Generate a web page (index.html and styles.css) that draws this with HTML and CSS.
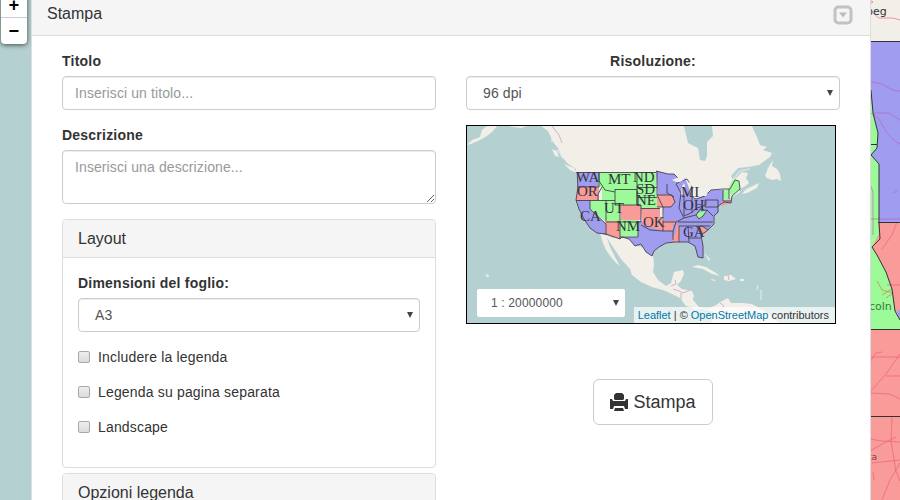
FILE: index.html
```html
<!DOCTYPE html>
<html lang="it">
<head>
<meta charset="utf-8">
<title>Stampa</title>
<link rel="stylesheet" href="styles.css">
</head>
<body>
<div class="viewport">
  <svg class="basemap" viewBox="870 0 30 500" width="30" height="500">
    <path fill="#f2efe9" d="M870 0H900V41H870Z"/>
    <path fill="#a09df1" d="M870 41H900V222H870Z"/>
    <path fill="#9cfa99" d="M870 90L873 113L878 133L877 148L871 155L879 164V222L880 240L870 250Z"/>
    <path fill="#9cfa99" d="M870 244L876 254L886 272L892 291L895 312L900 320V329H870Z"/>
    <path fill="#f99b99" d="M878 222H900V313L895 311L892 289L886 272L877 255L872 247L879 234Z"/>
    <path fill="#a09df1" d="M897 312L900 309V320Z"/>
    <path fill="#f99b99" d="M870 329H900V500H870Z"/>
    <g fill="none" stroke="#b75ab4" stroke-width=".6">
      <path d="M870 82Q880 82 887 87T900 91M870 113C884 117 881 134 900 144M874 113H889L900 120M870 219H900M893 193L897 191M870 184L873 192V235"/>
    </g>
    <g fill="none" stroke="#ed5574" stroke-width=".6">
      <path d="M870 0L873 2L870 4M873 13L879 18H893L900 20M897 222L892 235L882 249M887 285H900M870 357H900M870 362L876 353L882 352M870 392L886 374L900 354M886 376H900M870 393L890 394L900 399M870 439L882 441L900 442M870 451L884 443L896 437M892 417L891 441L896 471L900 481M872 463L900 460M882 500L890 480L900 463M874 480L873 472"/>
      <path stroke="#d16b45" d="M877 281L882 290L893 293L886 298M882 295L892 289"/>
    </g>
    <path fill="none" stroke="#333" d="M870 41.5H900M871 90L873 113L878 133L877 148L871 155L879 164V222L880 239L872 247L877 255L886 272L892 289L895 311L900 320M871 144.500H877M878 222.500H900M870 329.500H900M870 416.500H900"/>
    <text class="city" x="866" y="15">beg</text>
    <text class="city city-green" x="869" y="310">coln</text>
    <text class="city city-small" x="868" y="460">ta</text>
  </svg>

  <div class="zoom-control"><span class="zoom-in">+</span><span class="zoom-out">−</span></div>

  <main class="panel">
    <header class="panel-head">
      <span>Stampa</span>
      <svg class="toggle" viewBox="0 0 20 20" width="20" height="20"><rect x="2" y="2" width="16" height="16" rx="3.500" fill="none" stroke="#c2c2c2" stroke-width="3"/><path fill="#bdbdbd" d="M6 7.500H14L10 12.500Z"/></svg>
    </header>
    <div class="columns">
      <section class="left">
        <label class="label" for="title">Titolo</label>
        <input class="field" id="title" placeholder="Inserisci un titolo...">
        <label class="label label-desc" for="desc">Descrizione</label>
        <textarea class="field area" id="desc" placeholder="Inserisci una descrizione..."></textarea>
        <div class="card">
          <div class="card-head">Layout</div>
          <div class="card-body">
            <span class="label">Dimensioni del foglio:</span>
            <div class="field select">A3<i class="arrow"></i></div>
            <div class="check"><i class="box"></i>Includere la legenda</div>
            <div class="check"><i class="box"></i>Legenda su pagina separata</div>
            <div class="check"><i class="box"></i>Landscape</div>
          </div>
        </div>
        <div class="card card-next"><div class="card-head">Opzioni legenda</div></div>
      </section>
      <section class="right">
        <span class="label label-center">Risoluzione:</span>
        <div class="field select">96 dpi<i class="arrow"></i></div>
        <div class="preview">
          <svg class="map" viewBox="467 126 368 197" width="368" height="197">
            <path fill="#b5d0d0" d="M467 126H835V323H467Z"/>
            <g fill="#f2efe9">
              <path d="M467 145L472 140L480 137L482 130L487 126H497L493 131L487 136L478 141L471 144ZM508 126H527L521 128L514 127Z"/>
              <path d="M541 126L548 131L553 142L558 148L561 155L567 163L576 169L578 190L600 225L640 245L700 230L713 210L720 200L729 199L740 192L735 183L731 176L738 168L748 167L759 165L770 157L772 153L763 150L767 147L760 145L757 137L754 131L752 126H712L713 136L707 142L707 156L705 161L700 160L698 148L688 143L684 126Z"/>
              <path d="M736 178L742 172L748 173L746 178L749 183L744 187L737 190L732 187ZM742 194L746 189L755 185L759 183L757 188L747 193ZM765 176L768 168L773 160L772 166L777 169L780 174L781 181L777 179L772 180L767 178Z"/>
              <path d="M552 149L557 151L559 157L555 156ZM564 164L574 168L577 173L570 170Z"/>
              <path d="M600 233L613 238L628 238L635 245L644 248L653 256L654 264L653 272L658 280L666 286L671 283L674 272L683 270L684 274L681 281L677 285L682 289L692 291L694 296L690 307L686 306L680 298L672 294L663 290L652 287L641 282L632 275L630 269L621 259L613 247L607 238L610 247L615 257L620 266L616 263L611 257L606 250L603 243Z"/>
              <path d="M683 294L692 292L693 300L699 307L708 309L716 305L722 301L728 298L731 303L742 303L752 304L761 309L769 314L779 323H711L714 312L704 309L695 310L687 304Z"/>
              <path d="M692 267L698 265L706 267L716 273L720 276L712 274L703 269ZM710 279L716 280L714 281ZM724 276L731 275L736 279L729 281L724 280ZM740 279H744V281H740ZM707 256L710 259L709 261ZM485 274L489 275L488 278ZM476 268L479 269ZM480 270L484 271Z"/>
            </g>
            <path fill="none" stroke="#d5e5e3" stroke-width="1.500" d="M729 187L735 177L740 171L750 169"/>
            <path fill="none" stroke="#e4f0ef" d="M552 135V142M557 149L563 159M758 285L757 290M761 290V300M705 254L709 260"/>
            <path fill="none" stroke="#cb91bc" stroke-width=".7" d="M552 126L559 135L562 143M671 286L676 284L675 280M673 289L679 291L683 293L690 290M681 293V299M720 303L724 306L721 310M728 275L729 280"/>

            <path fill="#a09df1" d="M577 172H599V187H577ZM577 200H590V209L606 224V235L597 233L590 228L584 219L579 208Z"/>
            <path fill="#a09df1" d="M656 171L661 172L668 174L674 174L681 181L685 178L689 188L691 198L697 199L705 195L711 190H723V203L718 207L719 212L714 216L713 224L708 230L701 235L703 246L703 258L698 257L695 246L688 242L675 242L666 243L659 247L654 251L652 256L646 252L641 244L635 246L629 239L622 237H638V221L664 223L663 207H659Z"/>
            <path fill="#9cfa99" d="M599 172H656V186L658 208H620V222H606L590 209V200H602V187H598ZM620 220H638V236H620Z"/>
            <path fill="#f99b99" d="M577 187H599V200H576ZM605 221H620V239L606 234ZM621 205H641V220H621ZM641 208H660V216L663 222V231L656 229L643 225ZM657 195H672L675 202L671 207H657ZM662 221H676V232L671 240L680 243V226L673 224V231H663ZM696 227L702 226L708 230L704 235ZM721 202L730 200L731 203L722 206Z"/>
            <path fill="#9cfa99" d="M696 215L701 211L707 210L703 216L699 219ZM723 190H729V199H723ZM729 189L732 181L736 179L739 182L740 189L731 196Z"/>
            <g fill="none" stroke="#44434d" stroke-width=".9" stroke-linejoin="round">
              <path d="M577 172.500H656M577 172L578 187L576 200L579 209L584 219L590 228L597 233L606 234L620 239L622 237L629 239L635 246L641 244L646 252L652 256L654 251L659 247L666 243L675 242L688 242L695 246L698 257L703 258L703 246L701 235L708 230L714 224V216L718 212V206L724 202L731 203L732 196L740 189L739 181L735 180L730 189H723L711 190L705 196L696 199L690 196L692 187L687 179L681 181L674 174L668 174L656 171"/>
              <path d="M577 187H599V172M576 200.500H615M590 200V209L606 224V235M599 172V181L605 190L615 192M606 200V221M615 189V205H641V222H606M615 189.500H637V205M637 172V205M637 187.500H657M637 197.500H657M620 205V239M620 237H638V221M657 171V195L663 207V231M641 208.500H660M637 205.500H641M641 225L650 230L663 231M657 195H672L675 202L671 207H657M663 222H676L673 231V240M667 184V193L674 197M663 231H673M676 184L681 193L679 208L684 218L676 222M684 195V216L691 213L697 208L706 205V200M692 196V213M684 218L696 215L702 207M678 222H713M679 226H710M679 226V242M688 226L689 242M697 226L701 235M688 238H701M696 227L702 226L708 230M705 200H718V207H705ZM701 211L707 210L703 216L699 219L696 215M707 210L713 216M723 190V201H731M729 189V199M676 184L681 181M602 187L598 194V200"/>
            </g>
            <path fill="#f2efe9" d="M672 180L679 177L685 179L680 182L676 182ZM687 181L692 184L691 187ZM682 187L684 183L685 186L683 195L681 194ZM702 196L708 193L706 196Z"/>
            <g class="states">
              <text x="576" y="182">WA</text><text x="608" y="184">MT</text><text x="633" y="182">ND</text><text x="577" y="196">OR</text><text x="636" y="194">SD</text><text x="636" y="205">NE</text><text x="604" y="213">UT</text><text x="580" y="221">CA</text><text x="616" y="231">NM</text><text x="643" y="227">OK</text><text x="681" y="197">MI</text><text x="683" y="210">OH</text><text x="683" y="237">GA</text>
            </g>
          </svg>
          <div class="scale">1 : 20000000<i class="arrow"></i></div>
          <div class="credit"><span class="link">Leaflet</span> | © <span class="link">OpenStreetMap</span> contributors</div>
        </div>
        <button class="print">
          <svg viewBox="0 0 18 18" width="18" height="18"><path fill="#333" d="M6 0H12L14 2V6L13 7H5L4 6V2ZM0 6H2L3 8H15L16 6H18V16H15L14 13H4L3 16H0ZM5 15H13L14 18H4Z"/></svg>
          <span>Stampa</span>
        </button>
      </section>
    </div>
  </main>
</div>
</body>
</html>
```

FILE: styles.css
```css
* { box-sizing: border-box; }
body {
  margin: 0;
  overflow: hidden;
  font: 14px/20px "Liberation Sans", Arial, sans-serif;
  color: #333;
}
.viewport {
  position: relative;
  height: 500px;
  overflow: hidden;
  background: #b5d0d0;
}
.basemap { position: absolute; right: 0; top: 0; }
.city { font: 11px "DejaVu Sans", sans-serif; fill: #333; }
.city-green { fill: #34793a; }
.city-small { font-size: 9px; fill: #8c3e4b; }
.zoom-control {
  position: absolute;
  left: 1px;
  top: -9px;
  width: 26px;
  height: 53px;
  background: #fff;
  border-radius: 4px;
  box-shadow: 0 1px 5px rgba(0, 0, 0, .65);
  color: #000;
  font: bold 18px/28px "Liberation Mono", monospace;
  text-align: center;
}
.zoom-control span { display: block; height: 27px; }
.zoom-in { border-bottom: 1px solid #ccc; line-height: 30px; }
.panel {
  position: relative;
  width: 840px;
  height: 500px;
  margin-left: 31px;
  overflow: hidden;
  background: #fff;
  border: solid #ddd;
  border-width: 0 1px;
}
.panel-head {
  display: flex;
  justify-content: space-between;
  height: 36px;
  padding: 4px 17px 0 15px;
  font-size: 16px;
  background: #f5f5f5;
  border-bottom: 1px solid #ddd;
}
.toggle { margin-top: 1px; }
.columns { display: grid; grid-template-columns: 374px 374px; gap: 30px; padding: 15px 30px; }
.label { display: block; height: 25px; font-weight: bold; letter-spacing: .22px; }
.label-desc { margin-top: 15px; }
.label-center { text-align: center; }
.field {
  display: block;
  width: 100%;
  height: 34px;
  padding: 6px 12px;
  font: inherit;
  letter-spacing: .1px;
  color: #555;
  background: #fff;
  border: 1px solid #ccc;
  border-radius: 4px;
  box-shadow: inset 0 1px 1px rgba(0, 0, 0, .075);
}
.field::placeholder { color: #999; }
.area { height: 54px; }
.select { display: flex; justify-content: space-between; align-items: center; padding: 0 6px 0 16px; }
.arrow { border: solid transparent; border-width: 6px 3.5px 0; border-top-color: #444; }
.card { height: 249px; margin-top: 15px; border: 1px solid #ddd; border-radius: 4px; overflow: hidden; }
.card-next { margin-top: 5px; }
.card-head { height: 38px; padding: 9px 15px; font-size: 16px; background: #f5f5f5; border-bottom: 1px solid #ddd; }
.card-body { padding: 15px; }
.check { display: flex; align-items: center; gap: 8px; height: 20px; margin-top: 15px; letter-spacing: .17px; }
.box { width: 12px; height: 12px; border: 1px solid #a8a8a8; border-radius: 2px; background: linear-gradient(#eee, #dcdcdc); }
.preview { position: relative; width: 370px; height: 199px; margin-top: 15px; border: 1px solid #000; }
.map { display: block; }
.states text { font: 15px "Liberation Serif", serif; fill: #33333b; }
.scale {
  position: absolute;
  left: 10px;
  bottom: 6px;
  display: flex;
  justify-content: space-between;
  align-items: center;
  width: 148px;
  height: 28px;
  padding: 0 6px 0 14px;
  font-size: 12px;
  letter-spacing: .15px;
  color: #555;
  background: #fff;
  border-radius: 2px;
}
.credit {
  position: absolute;
  right: 0;
  bottom: 0;
  padding: 0 6px 0 4px;
  font-size: 11px;
  line-height: 16px;
  white-space: nowrap;
  background: rgba(255, 255, 255, .7);
}
.link { color: #0078a8; }
.print {
  display: flex;
  align-items: center;
  justify-content: center;
  gap: 5px;
  width: 120px;
  height: 46px;
  margin: 55px auto 0;
  padding: 0;
  font: 18px "Liberation Sans", Arial, sans-serif;
  color: #333;
  background: #fff;
  border: 1px solid #ccc;
  border-radius: 6px;
}
```
